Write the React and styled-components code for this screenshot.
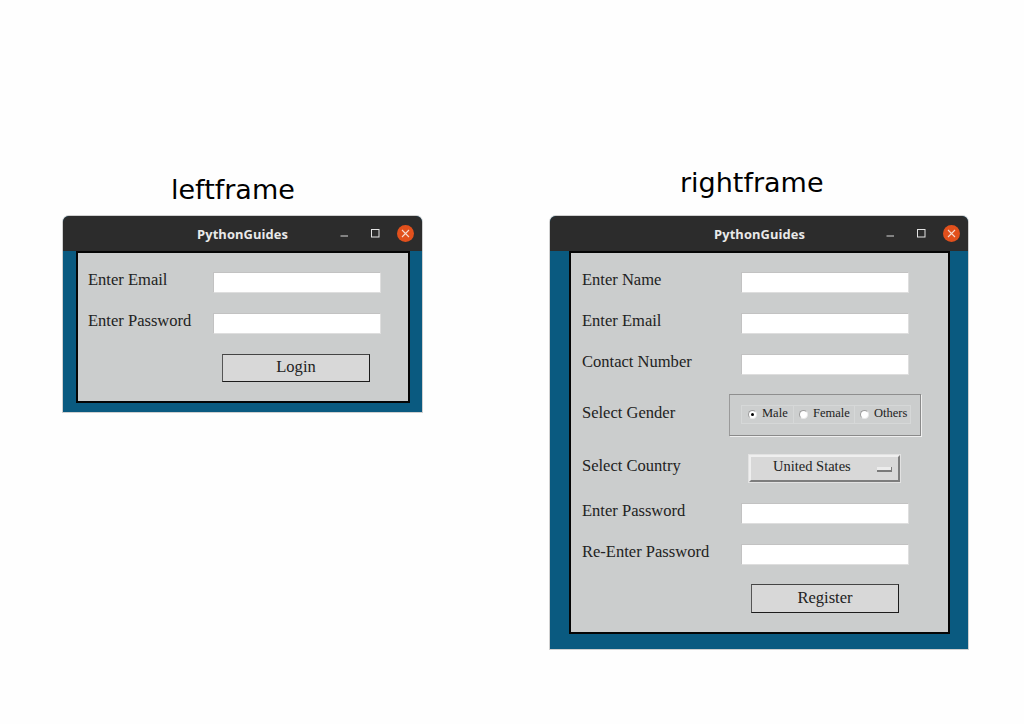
import React from 'react';
import styled, { createGlobalStyle } from 'styled-components';

const Global = createGlobalStyle`
  html, body { margin: 0; padding: 0; background: #fefefe; }
  body { width: 1024px; height: 724px; overflow: hidden; }
`;

const Page = styled.div`
  display: flex;
  align-items: flex-start;
  gap: 128px;
  padding-left: 63px;
  height: 724px;
  box-sizing: border-box;
`;

const Column = styled.section`
  display: flex;
  flex-direction: column;
  width: ${p => p.$width}px;
`;

const Caption = styled.h2`
  margin: 0;
  height: 216px;
  box-sizing: border-box;
  padding-top: ${p => p.$top}px;
  padding-left: ${p => p.$left}px;
  font: 400 27px/30px "DejaVu Sans", sans-serif;
  color: #000;
  white-space: nowrap;
`;

const Win = styled.div`
  display: flex;
  flex-direction: column;
  height: ${p => p.$height}px;
  background: #0a5a80;
  border-radius: 6px 6px 0 0;
  box-shadow: 0 0 0 1px #d0d0d0;
`;

const TitleBar = styled.header`
  position: relative;
  flex: none;
  height: 35px;
  display: flex;
  align-items: center;
  justify-content: flex-end;
  background: #2c2c2c;
  border-radius: 6px 6px 0 0;
  padding-right: 8px;
`;

const TitleText = styled.span`
  position: absolute;
  left: ${p => p.$left}px;
  top: 10px;
  font: 700 12.9px/17px "Open Sans", sans-serif;
  color: #e9e9e9;
  letter-spacing: 0.1px;
`;

const Controls = styled.div`
  display: flex;
  align-items: center;
`;

const WinButton = styled.span`
  display: flex;
  align-items: center;
  justify-content: center;
  width: 31px;
  height: 18px;
`;

const CloseDot = styled.span`
  display: flex;
  align-items: center;
  justify-content: center;
  width: 17px;
  height: 17px;
  margin-left: 6px;
  border-radius: 50%;
  background: #e2501c;
`;

const Form = styled.form`
  box-sizing: border-box;
  height: ${p => p.$height}px;
  margin: 0 ${p => p.$right}px 0 ${p => p.$left}px;
  padding: 19px 0 0 ${p => p.$pad}px;
  border: 2px solid #050505;
  background: #cbcdcd;
  display: flex;
  flex-direction: column;
`;

const Row = styled.div`
  display: flex;
  align-items: center;
  height: ${p => p.$h || 21}px;
  margin-top: ${p => p.$mt || 0}px;
`;

const Label = styled.label`
  flex: none;
  width: ${p => p.$width}px;
  margin-top: ${p => p.$shift ?? -5}px;
  font: 400 16.55px/20px "Liberation Serif", serif;
  color: #222;
  white-space: nowrap;
`;

const Input = styled.input`
  flex: none;
  box-sizing: border-box;
  width: 168px;
  height: 21px;
  margin: 0;
  padding: 0;
  background: #fff;
  border: 1px solid #c2c2c2;
  border-bottom-color: #dedede;
  border-right-color: #dedede;
  outline: none;
`;

const ActionButton = styled.button`
  flex: none;
  box-sizing: border-box;
  width: 148px;
  height: ${p => p.$h || 28}px;
  margin: 0 0 0 ${p => p.$ml}px;
  padding: 0 0 2px;
  background: #d8d8d8;
  border: 1px solid #1c1c1c;
  border-top-color: #444;
  border-left-color: #555;
  font: 400 16.55px/20px "Liberation Serif", serif;
  color: #222;
`;

const GenderBox = styled.fieldset`
  box-sizing: border-box;
  width: 192px;
  height: 42px;
  margin: 0 0 0 -12px;
  padding: 0 0 2px 11px;
  display: flex;
  align-items: center;
  border: 1px solid #ececec;
  border-top-color: #8e8e8e;
  border-left-color: #9a9a9a;
  border-right-color: #8a8a8a;
  border-bottom-color: #8a8a8a;
  box-shadow: 1px 1px 0 #efefef;
`;

const RadioCell = styled.label`
  box-sizing: border-box;
  width: ${p => p.$w}px;
  height: 19px;
  display: flex;
  align-items: center;
  gap: 5px;
  padding: 0 0 1px ${p => (p.$first ? 6 : 5)}px;
  background: #cdcfcf;
  border: 1px solid #d6d8d8;
  border-left-width: ${p => (p.$first ? 1 : 0)}px;
  font: 400 12.5px/15px "Liberation Serif", serif;
  color: #222;
  white-space: nowrap;
`;

const RadioDot = styled.span`
  flex: none;
  box-sizing: border-box;
  display: flex;
  align-items: center;
  justify-content: center;
  width: 9px;
  height: 9px;
  margin-top: 2px;
  border-radius: 50%;
  background: #fff;
  border: 1px solid #9c9c9c;
  border-right-color: #e8e8e8;
  border-bottom-color: #e8e8e8;
  &::after {
    content: "";
    display: ${p => (p.$on ? 'block' : 'none')};
    width: 3px;
    height: 3px;
    border-radius: 50%;
    background: #000;
  }
`;

const Select = styled.div`
  box-sizing: border-box;
  flex: none;
  width: 151px;
  height: 27px;
  margin-left: 8px;
  display: flex;
  align-items: center;
  justify-content: space-between;
  padding: 0 6px 0 22px;
  background: #d8d8d8;
  border: 2px solid #efefef;
  border-right-color: #7d7d7d;
  border-bottom-color: #7d7d7d;
  box-shadow: 0 0 0 1px #e2e2e2;
  font: 400 14.5px/18px "Liberation Serif", serif;
  color: #222;
`;

const SelectText = styled.span`
  margin-top: -6px;
  white-space: nowrap;
`;

const Arrow = styled.span`
  display: block;
  box-sizing: border-box;
  width: 15px;
  height: 5px;
  margin-top: 1px;
  background: #ececec;
  border-bottom: 2px solid #7a7a7a;
  border-right: 1px solid #7a7a7a;
`;

const WindowBar = ({ titleLeft }) => (
  <TitleBar>
    <TitleText $left={titleLeft}>PythonGuides</TitleText>
    <Controls>
      <WinButton>
        <svg width="9" height="9" viewBox="0 0 9 9"><path d="M0.5 7h7.5" stroke="#d8d8d8" strokeWidth="1" /></svg>
      </WinButton>
      <WinButton>
        <svg width="9" height="9" viewBox="0 0 9 9"><rect x="0.5" y="0.5" width="7.5" height="7.5" fill="none" stroke="#e4e4e4" strokeWidth="1" /></svg>
      </WinButton>
      <CloseDot>
        <svg width="9" height="9" viewBox="0 0 9 9"><path d="M1 1l7 7M8 1l-7 7" stroke="#f6dcd0" strokeWidth="1.1" /></svg>
      </CloseDot>
    </Controls>
  </TitleBar>
);

const Radio = ({ label, w, on, first }) => (
  <RadioCell $w={w} $first={first}>
    <RadioDot $on={on} />
    {label}
  </RadioCell>
);

export default function App() {
  return (
    <>
      <Global />
      <Page>
        <Column $width={359}>
          <Caption $top={175} $left={108}>leftframe</Caption>
          <Win $height={196}>
            <WindowBar titleLeft={134} />
            <Form $height={152} $left={13} $right={12} $pad={10}>
              <Row>
                <Label $width={125}>Enter Email</Label>
                <Input />
              </Row>
              <Row $mt={20}>
                <Label $width={125}>Enter Password</Label>
                <Input />
              </Row>
              <Row $mt={20} $h={28}>
                <Label $width={125} $shift={0} />
                <ActionButton $ml={9}>Login</ActionButton>
              </Row>
            </Form>
          </Win>
        </Column>
        <Column $width={418}>
          <Caption $top={168} $left={130}>rightframe</Caption>
          <Win $height={433}>
            <WindowBar titleLeft={164} />
            <Form $height={383} $left={19} $right={18} $pad={11}>
              <Row>
                <Label $width={159}>Enter Name</Label>
                <Input />
              </Row>
              <Row $mt={20}>
                <Label $width={159}>Enter Email</Label>
                <Input />
              </Row>
              <Row $mt={20}>
                <Label $width={159}>Contact Number</Label>
                <Input />
              </Row>
              <Row $mt={19} $h={42}>
                <Label $width={159} $shift={-5}>Select Gender</Label>
                <GenderBox>
                  <Radio label="Male" w={53} on first />
                  <Radio label="Female" w={61} />
                  <Radio label="Others" w={56} />
                </GenderBox>
              </Row>
              <Row $mt={18} $h={29}>
                <Label $width={159} $shift={-5}>Select Country</Label>
                <Select>
                  <SelectText>United States</SelectText>
                  <Arrow />
                </Select>
              </Row>
              <Row $mt={20}>
                <Label $width={159}>Enter Password</Label>
                <Input />
              </Row>
              <Row $mt={20}>
                <Label $width={159}>Re-Enter Password</Label>
                <Input />
              </Row>
              <Row $mt={19} $h={29}>
                <Label $width={159} $shift={0} />
                <ActionButton $ml={10} $h={29}>Register</ActionButton>
              </Row>
            </Form>
          </Win>
        </Column>
      </Page>
    </>
  );
}
